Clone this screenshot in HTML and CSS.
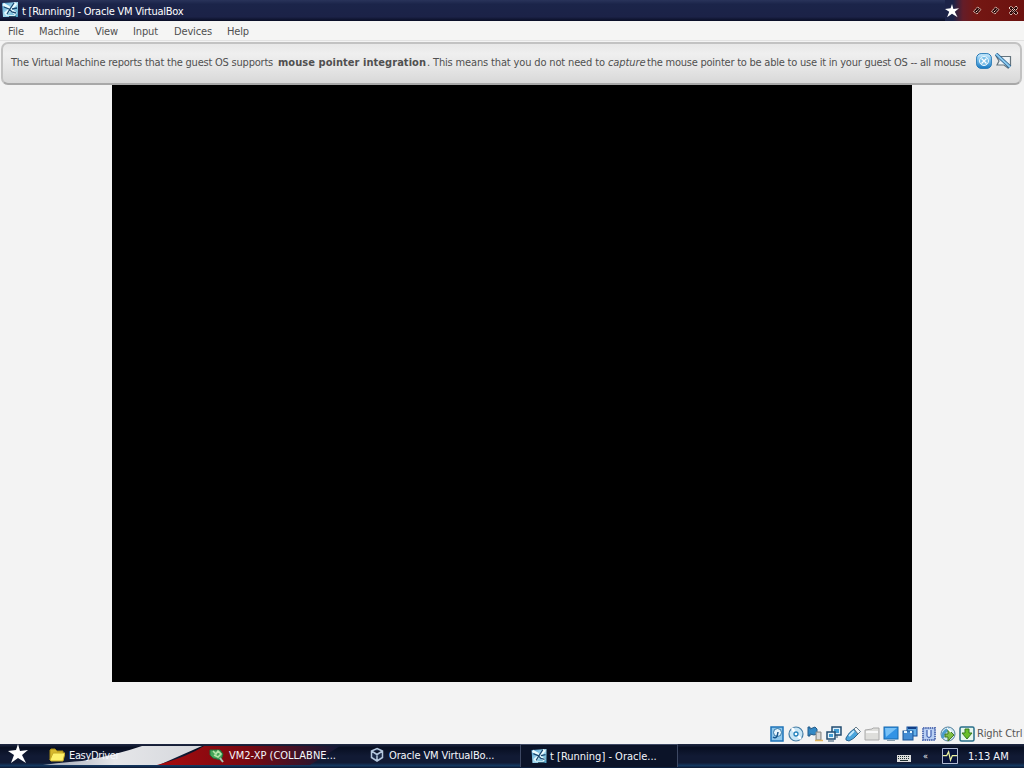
FILE: index.html
```html
<!DOCTYPE html>
<html lang="en">
<head>
<meta charset="utf-8">
<title>t [Running] - Oracle VM VirtualBox</title>
<link rel="stylesheet" href="styles.css">
</head>
<body>
<svg class="defs" width="0" height="0">
  <defs>
    <linearGradient id="blue" x1="0" y1="0" x2="0" y2="1"><stop offset="0" stop-color="#d2efff"/><stop offset=".45" stop-color="#78bdeb"/><stop offset="1" stop-color="#1678c2"/></linearGradient>
    <linearGradient id="ice" x1="0" y1="0" x2="1" y2="1"><stop offset="0" stop-color="#3f8fc4"/><stop offset=".5" stop-color="#a5dcf2"/><stop offset="1" stop-color="#4799bd"/></linearGradient>
    <linearGradient id="white-flag" x1="0" y1="0" x2="1" y2="0"><stop offset="0" stop-color="#9da5b4"/><stop offset=".45" stop-color="#e5e6e9"/><stop offset="1" stop-color="#d5d7dc"/></linearGradient>
    <linearGradient id="red-flag" x1="0" y1="0" x2="1" y2="0"><stop offset="0" stop-color="#a80c0e"/><stop offset=".5" stop-color="#780811"/><stop offset="1" stop-color="#121a37"/></linearGradient>
    <symbol id="vm" viewBox="0 0 16 16"><path fill="url(#ice)" d="M0 1l16-1v15H1z"/><path d="M1 2l5 3 3 3 5 4M14 1L10 6 3 12" stroke="#e9fbff" stroke-width="3" fill="none"/><path d="M2 5l5 2 3 3 4 1M12 1L8 7l-3 5M10 7l5-1" stroke="#17466f" stroke-width="1.3" fill="none"/><path d="M4 13.500h9" stroke="#d4edf2"/><path d="M7 14.500h7" stroke="#244b61"/></symbol>
    <symbol id="star" viewBox="0 0 20 20"><path fill="#fff" d="M10 0l2 7 8-1-6 5 4 8-8-5-7 5 3-8-6-4 8-1z"/></symbol>
  </defs>
</svg>
<div class="screen">
  <header class="titlebar">
    <svg class="title-icon" width="16" height="16"><use href="#vm"/></svg>
    <span class="title-text">t [Running] - Oracle VM VirtualBox</span>
    <div class="window-buttons">
      <svg width="14" height="14"><use href="#star"/></svg>
      <svg class="btn-min" width="11" height="11" viewBox="0 0 11 11"><path d="M1.500 6.500l4-4.500L9 4.500l-4 4.500zM4 7l3-3" fill="#2a0808" stroke="#f4d3c8" stroke-dasharray="1.500 .6"/></svg>
      <svg class="btn-max" width="11" height="11" viewBox="0 0 11 11"><path d="M1.500 6.500l4-4.500L9 4.500l-4 4.500zM4 7l3-3" fill="#2a0808" stroke="#f4d3c8" stroke-dasharray="1.500 .6"/></svg>
      <svg class="btn-close" width="11" height="11" viewBox="0 0 11 11"><path d="M1 3l2-2 2.500 2.500L8 1l2 2-2.500 2.500L10 8l-2 2-2.500-2.500L3 10 1 8l2.500-2.500zM4 4l3 3M7 4L4 7" fill="#2a0808" stroke="#f4d3c8" stroke-dasharray="1.500 .5"/></svg>
    </div>
  </header>
  <nav class="menubar">
    <span class="m-file">File</span><span class="m-machine">Machine</span><span class="m-view">View</span><span class="m-input">Input</span><span class="m-devices">Devices</span><span class="m-help">Help</span>
  </nav>
  <main class="workspace">
    <div class="guest"></div>
    <div class="notice">
      <p class="message"><span class="s1">The Virtual Machine reports that the guest OS supports</span><b class="s2">mouse pointer integration</b><span class="s3">. This means that you do not need to</span><i class="s4">capture</i><span class="s5">the mouse pointer to be able to use it in your guest OS -- all mouse</span></p>
      <svg class="n-close" width="16" height="16" viewBox="0 0 16 16"><rect x=".6" y=".6" width="14.800" height="14.800" rx="4.500" fill="url(#blue)" stroke="#287bb7"/><circle cx="8" cy="8" r="4.500" fill="#78bee8" stroke="#eefaff"/><path d="M5.500 5.500l5 5M10.500 5.500l-5 5" stroke="#fff" stroke-width="1.300"/></svg>
      <svg class="n-mute" width="17" height="16" viewBox="0 0 17 16"><path d="M1.500 3.500h14v9H13v2.500l-4-3H2l2-4z" fill="#eef3f6" stroke="#65747d" stroke-width="1.200"/><path d="M1 1l14 13" stroke="#2c5f8b" stroke-width="3.500"/><path d="M1 1l14 13" stroke="#8dccf1" stroke-width="1.800"/></svg>
    </div>
  </main>
  <footer class="statusbar">
    <svg width="16" height="16" viewBox="0 0 16 16"><rect x="2" y="1" width="12" height="14" fill="#8fc8ec" stroke="#1e73b8" stroke-width="1.500"/><circle cx="8.500" cy="6.500" r="4" fill="#e6f5fc" stroke="#3576a5"/><path d="M4 11q4 3 5-5" fill="none" stroke="#17568c" stroke-width="1.500"/></svg>
    <svg width="16" height="16" viewBox="0 0 16 16"><circle cx="8" cy="8" r="7" fill="#c9e6f6" stroke="#467da5" stroke-width="1.200"/><path d="M8 8L4 2M8 8l5 5" stroke="#fff" stroke-width="2.500"/><circle cx="8" cy="8" r="2" fill="#fff" stroke="#2381bc" stroke-width="1.300"/></svg>
    <svg width="16" height="16" viewBox="0 0 16 16"><path d="M1 1h2v2l5-2 2 2v5L7 9 3 8v2H1z" fill="#3489c5" stroke="#245b88"/><path d="M9 6h5v8H9z" fill="#c4c4bf" stroke="#888"/><path d="M10 8h3M10 10h3M10 12h3" stroke="#eee"/><path d="M8 14.500h8" stroke="#dfb45b" stroke-width="1.500"/></svg>
    <svg width="16" height="16" viewBox="0 0 16 16"><rect x="6" y="1" width="9" height="8" fill="#dceefa" stroke="#234c70" stroke-width="1.500"/><path d="M8 3h5v4H8z" fill="#419bd2"/><rect x="1" y="6" width="8" height="7" fill="#e6f5fc" stroke="#234c70" stroke-width="1.500"/><path d="M3 8h4v3H3z" fill="#419bd2"/><path d="M2 15h6M11 9v3" stroke="#345673"/></svg>
    <svg width="16" height="16" viewBox="0 0 16 16"><path d="M1 12Q4 6 9 3l4 5q-4 5-9 7L1 14z" fill="#4aa4db" stroke="#286490"/><path d="M9 3l2-2 4.500 4.500L13 8z" fill="#f4f8fa" stroke="#667d8c"/><path d="M4 10l5-5" stroke="#c7eafe" stroke-width="1.800"/></svg>
    <svg width="16" height="16" viewBox="0 0 16 16"><path d="M1 4l7-1 1-1h6v12H1z" fill="#dededb" stroke="#aaa"/><path d="M2 6h12" stroke="#f8f8f8" stroke-width="2"/></svg>
    <svg width="16" height="16" viewBox="0 0 16 16"><rect x="1" y="1" width="14" height="12" fill="#3293e5" stroke="#1768ad"/><path d="M2 2h12L3 11z" fill="#78c1f6"/><path d="M4 14.500h8" stroke="#8a9fae"/></svg>
    <svg width="16" height="16" viewBox="0 0 16 16"><rect x="5" y="1" width="10" height="9" fill="#65b0e9" stroke="#154d99"/><path d="M6 2h8" stroke="#113e86" stroke-width="2"/><rect x="1" y="5" width="10" height="9" fill="#438cd3" stroke="#1d5494"/><path d="M2 6h3M8 6h2" stroke="#e5f6ff" stroke-width="2"/></svg>
    <svg width="16" height="16" viewBox="0 0 16 16"><rect x="2" y="2" width="12" height="12" fill="#b8cff3" stroke="#5a74b6" stroke-width="2" stroke-dasharray="1.500 .7"/><path d="M6 4v6q2 3 4 0V4" fill="#e5f0ff" stroke="#4a69b5" stroke-width="1.300"/></svg>
    <svg width="16" height="16" viewBox="0 0 16 16"><circle cx="8" cy="8" r="7" fill="#d4e9f2" stroke="#507e9b"/><path d="M3 12Q2 6 9 3" fill="none" stroke="#4b9dcd" stroke-width="3"/><path d="M8 3l6 6-6 6v-4H5V8h3z" fill="#80bf45" stroke="#427627"/><path d="M7 2l4 4" stroke="#fff" stroke-width="1.500"/></svg>
    <svg width="16" height="16" viewBox="0 0 16 16"><rect x="1" y="1" width="14" height="14" rx="1.500" fill="#e7f7ed" stroke="#286e89" stroke-width="1.500"/><path d="M6 3h4v4h3l-5 6-5-6h3z" fill="#69bf29" stroke="#37791f"/></svg>
    <span class="host-key">Right Ctrl</span>
  </footer>
  <div class="taskbar">
    <svg class="flag" width="400" height="24" viewBox="0 0 400 24"><path fill="url(#white-flag)" d="M43 21Q65 18 82 17Q116 11 142 2H202L159 21Z"/><path fill="url(#red-flag)" d="M157 21Q187 13 204 2H340L310 21Z"/></svg>
    <svg class="start" width="20" height="20"><use href="#star"/></svg>
    <div class="task task-folder"><svg width="16" height="14" viewBox="0 0 16 14"><path d="M1 12V2l1-1h4l2 2h6v9z" fill="#d7b82d" stroke="#a48816"/><path d="M1 12l3-7h12l-2 8H2z" fill="#fff16b" stroke="#c5a926"/></svg><span class="t1">EasyDriver</span></div>
    <div class="task task-xp"><svg width="16" height="15" viewBox="0 0 16 15"><path d="M1 2h10l3 4-2 6-8-2-3-3z" fill="#45a65a" stroke="#226c3b"/><path d="M4 3l3 3 2-3 3 3-3 3-4-2" fill="none" stroke="#b5e5a8" stroke-width="1.500"/><path d="M11 10l3 4" stroke="#aac6b4" stroke-width="2"/></svg><span class="t2">VM2-XP (COLLABNE...</span></div>
    <div class="task task-box"><svg width="14" height="16" viewBox="0 0 14 16"><path d="M7 1.500l5.500 2.500v6.500L7 14l-5.500-3.500V4zM1.500 4L7 7.500 12.500 4M7 7.500V14" fill="#1a2947" stroke="#b4c7de" stroke-width="1.500"/></svg><span class="t3">Oracle VM VirtualBo...</span></div>
    <div class="task task-running"><svg width="16" height="15"><use href="#vm"/></svg><span class="t4">t [Running] - Oracle...</span></div>
    <div class="tray">
      <svg class="keyboard" width="14" height="8" viewBox="0 0 14 8"><path fill="#ddd" d="M0 1h14v7H0z"/><path d="M1 2.500h12M1 4.500h12" stroke="#233" stroke-dasharray="1 1"/><path d="M3 6.500h8" stroke="#233"/></svg>
      <span class="chevron">«</span>
      <svg class="pulse" width="16" height="16" viewBox="0 0 17 17"><path d="M.5.5h16v16H.5z" fill="#07133b" stroke="#bec8e0"/><path d="M1 8h4l2-4 2 9 2-5h5" fill="none" stroke="#edf3a1" stroke-width="1.300"/></svg>
      <span class="clock">1:13 AM</span>
    </div>
  </div>
</div>
</body>
</html>
```
FILE: styles.css
```css
* { box-sizing: border-box; }
body { margin: 0; font: 11px/14px "DejaVu Sans Condensed", "DejaVu Sans", sans-serif; font-stretch: condensed; background: #f3f3f3; white-space: nowrap; }
svg { display: block; flex-shrink: 0; }
.defs { position: absolute; }
.screen { width: 1024px; height: 768px; display: flex; flex-direction: column; overflow: hidden; }
.titlebar { height: 21px; flex: none; display: flex; align-items: center; padding-left: 2px; color: #fff; background: linear-gradient(#29335a, #1b2449 20%, #1b2247 80%, #080d24); }
.title-icon { margin-bottom: 2px; }
.title-text { margin-left: 4px; padding-top: 2px; letter-spacing: -.24px; }
.window-buttons { margin-left: auto; width: 79px; height: 21px; display: flex; align-items: center; background: linear-gradient(90deg, #1b2247 8px, #641d29 18px, #741713 30px, #6c120f); }
.btn-min { margin-left: 13px; }
.btn-max, .btn-close { margin-left: 7px; }
.menubar { height: 20px; flex: none; display: flex; align-items: center; padding: 2px 0 0 8px; color: #505050; background: #f5f5f4; border-bottom: 1px solid #e2e2e2; letter-spacing: -.15px; }
.m-file { width: 31px; } .m-machine { width: 56px; } .m-view { width: 38px; } .m-input { width: 41px; } .m-devices { width: 53px; }
.workspace { position: relative; flex: none; height: 683px; padding: 41px 112px 0; }
.guest { width: 800px; height: 600px; background: #000; }
.notice { position: absolute; left: 1px; top: 1px; width: 1021px; height: 43px; display: flex; padding-left: 8px; color: #505050; background: linear-gradient(#e8e8e8, #efefef 25%, #e6e6e6 60%, #d8d8d8); border: 2px solid #c2c2c2; border-bottom-color: #a8a8a8; border-radius: 7px; }
.message { display: flex; flex: none; margin: 12px 0 0; width: 965px; }
.message > * { flex: none; }
.s1 { width: 267px; letter-spacing: -.22px; }
.s2 { width: 149px; letter-spacing: .05px; }
.s3 { width: 181px; letter-spacing: -.15px; }
.s4 { width: 39px; letter-spacing: -.1px; }
.s5 { letter-spacing: -.23px; }
.n-close { margin-top: 9px; } .n-mute { margin: 9px 0 0 3px; }
.statusbar { height: 20px; flex: none; display: flex; align-items: center; gap: 3px; padding-left: 769px; color: #555; }
.host-key { margin-left: -1px; letter-spacing: -.15px; }
.taskbar { position: relative; height: 24px; flex: none; display: flex; color: #f4f6fc; background: linear-gradient(#202944, #080f22 15%, #111a34 50%, #111a34 78%, #14375f 90%, #0b1933); }
.flag { position: absolute; left: 0; top: 0; }
.start { margin-left: 8px; width: 20px; }
.task { position: relative; display: flex; align-items: center; height: 22px; }
.task span { padding-top: 1px; }
.task-folder { margin-left: 21px; width: 160px; gap: 4px; }
.task-xp { width: 161px; gap: 4px; }
.task-box { width: 150px; gap: 5px; }
.task-running { width: 158px; height: 23px; gap: 3px; padding: 1px 0 0 10px; background: #0b1328; border: 1px solid #3d4863; border-bottom: 0; }
.t1 { letter-spacing: -.35px; }
.t3 { letter-spacing: -.13px; }
.tray { display: flex; align-items: center; margin-left: 219px; height: 24px; }
.chevron { margin-left: 12px; width: 19px; font-size: 9px; }
.keyboard { margin-top: 4px; }
.clock { margin-left: 10px; padding-top: 1px; }
```
